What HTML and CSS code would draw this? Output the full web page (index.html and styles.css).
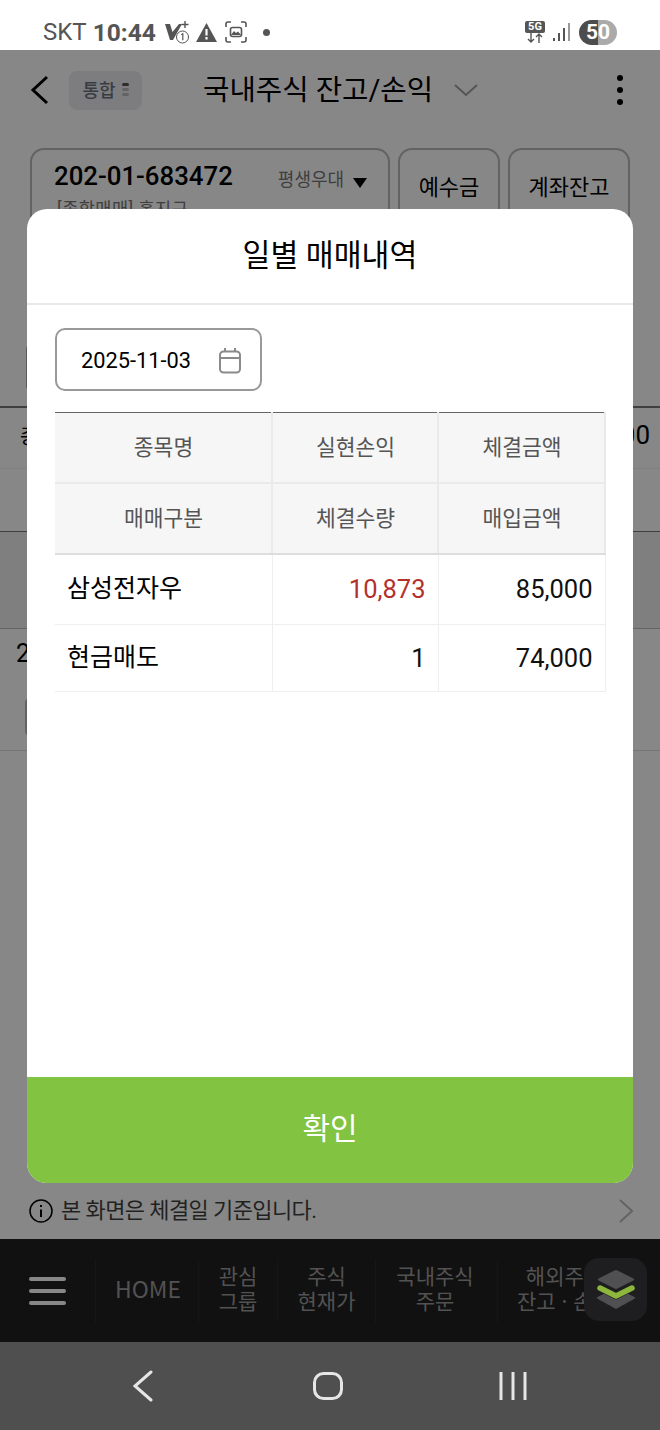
FILE: index.html
```html
<!DOCTYPE html>
<html lang="ko">
  <head>
    <meta charset="UTF-8" />
    <title>일별 매매내역</title>
    <link rel="stylesheet" href="styles.css">
  </head>
  <body>
    <div class="phone">
      <!-- status bar -->
      <div class="status-bar">
        <div class="status-left">
          <span class="carrier">SKT</span>
          <span class="clock">10:44</span>
          <svg class="status-icon" width="25" height="24" viewBox="0 0 25 24">
            <path d="M0 4h5l2.500 8L14 4h3L8 20H5z" fill="#555"/>
            <path d="M20 1v7M16.500 4.500h7" stroke="#555" stroke-width="1.400"/>
            <circle cx="17.500" cy="17" r="6" fill="#fff" stroke="#555" stroke-width="1"/>
            <path d="M16.300 14.800l1.500-1v6.500" fill="none" stroke="#555" stroke-width="1.200"/>
          </svg>
          <svg class="status-icon triangle" width="21" height="19" viewBox="0 0 21 19">
            <path d="M10.500 0L21 19H0z" fill="#555"/>
            <path d="M10.500 6v6.500M10.500 14v2.500" stroke="#fff" stroke-width="2.200"/>
          </svg>
          <svg class="status-icon" width="22" height="22" viewBox="0 0 22 22" fill="none" stroke="#555" stroke-width="1.600">
            <path d="M1 6V3a2 2 0 0 1 2-2h3M16 1h3a2 2 0 0 1 2 2v3M21 16v3a2 2 0 0 1-2 2h-3M6 21H3a2 2 0 0 1-2-2v-3"/>
            <rect x="5.500" y="6.500" width="11" height="9" rx="2"/>
            <path d="M6 14l3-4 2 2 2-1.500 3 3.500z" fill="#555" stroke="none"/>
          </svg>
          <span class="status-dot"></span>
        </div>
        <div class="status-right">
          <div class="fiveg">
            <span class="fiveg-label">5G</span>
            <svg width="20" height="10" viewBox="0 0 20 10" fill="none" stroke="#555" stroke-width="1.400">
              <path d="M6 0v9M3 6l3 3 3-3M14 10V1M11 4l3-3 3 3"/>
            </svg>
          </div>
          <svg width="18" height="20" viewBox="0 0 18 20" fill="#555">
            <rect x="0" y="16" width="2" height="3"/>
            <rect x="5" y="11" width="2" height="8"/>
            <rect x="10" y="6" width="2" height="13"/>
            <rect x="15" y="1" width="2" height="18" fill="#999"/>
          </svg>
          <div class="battery"><span class="battery-a">5</span><span class="battery-b">0</span></div>
        </div>
      </div>

      <div class="app">
        <!-- page behind the dialog -->
        <div class="app-header">
          <svg width="22" height="32" viewBox="0 0 22 32" fill="none" stroke="#000" stroke-width="3">
            <path d="M18 3L4 16l14 13"/>
          </svg>
          <div class="merge-badge">
            <span>통합</span>
            <span class="merge-dots"><i class="on"></i><i></i><i></i></span>
          </div>
          <div class="app-title">국내주식 잔고/손익</div>
          <svg class="title-arrow" width="26" height="16" viewBox="0 0 26 16" fill="none" stroke="#a0a0a0" stroke-width="2">
            <path d="M2 3l11 10L24 3"/>
          </svg>
          <div class="kebab"><i></i><i></i><i></i></div>
        </div>

        <div class="account-row">
          <div class="account-box">
            <div class="account-top">
              <span class="account-no">202-01-683472</span>
              <span class="account-kind">평생우대</span>
              <span class="account-caret"></span>
            </div>
            <div class="account-name">[종합매매] 홍지구</div>
          </div>
          <div class="tab-btn tab-small">예수금</div>
          <div class="tab-btn tab-wide">계좌잔고</div>
        </div>

        <div class="filter-row"><span class="filter-box"></span></div>

        <div class="list">
          <div class="list-head">
            <div class="list-row row-a"><span class="cut-left">종</span><span class="cut-right">000</span></div>
            <div class="list-row row-b"></div>
          </div>
          <div class="list-band"></div>
          <div class="list-item">
            <div class="item-date">2025</div>
            <span class="item-btn"></span>
          </div>
        </div>

        <div class="notice">
          <svg width="24" height="24" viewBox="0 0 24 24" fill="none" stroke="#000" stroke-width="1.500">
            <circle cx="12" cy="12" r="11"/>
            <path d="M12 10.500v7.500" stroke-width="2"/>
            <path d="M12 6v2" stroke-width="2"/>
          </svg>
          <span class="notice-text">본 화면은 체결일 기준입니다.</span>
          <svg class="notice-arrow" width="16" height="26" viewBox="0 0 16 26" fill="none" stroke="#bbb" stroke-width="2">
            <path d="M2 2l12 11L2 24"/>
          </svg>
        </div>

        <div class="menu-bar">
          <div class="menu-burger"><i></i><i></i><i></i></div>
          <div class="menu-item menu-home">HOME</div>
          <div class="menu-item menu-group">관심<br>그룹</div>
          <div class="menu-item menu-price">주식<br>현재가</div>
          <div class="menu-item menu-order">국내주식<br>주문</div>
          <div class="menu-item menu-foreign">해외주식<br>잔고 · 손익</div>
        </div>

        <div class="dim"></div>

        <div class="float-btn">
          <svg width="40" height="42" viewBox="0 0 40 42">
            <path d="M2 29l6-3 12 6 12-6 6 3-18 10z" fill="#505053" stroke="#505053" stroke-width="2" stroke-linejoin="round"/>
            <path d="M4 19l16 8 16-8" fill="none" stroke="#8cb63c" stroke-width="5.500" stroke-linecap="round" stroke-linejoin="round"/>
            <path d="M20 2L37 10.500 20 19 3 10.500z" fill="#505053" stroke="#505053" stroke-width="2" stroke-linejoin="round"/>
          </svg>
        </div>

        <!-- dialog -->
        <div class="modal">
          <div class="modal-title">일별 매매내역</div>
          <div class="modal-body">
            <div class="date-box">
              <span class="date-text">2025-11-03</span>
              <svg width="24" height="26" viewBox="0 0 24 26" fill="none" stroke="#8a8a8a" stroke-width="2">
                <rect x="2" y="3.500" width="20" height="21" rx="3.500"/>
                <path d="M2 10h20M7 0v4M17 0v4"/>
              </svg>
            </div>
            <table class="trade-table">
              <colgroup>
                <col class="col-a"><col class="col-b"><col class="col-c">
              </colgroup>
              <thead>
                <tr class="head-row-1"><th>종목명</th><th>실현손익</th><th>체결금액</th></tr>
                <tr class="head-row-2"><th>매매구분</th><th>체결수량</th><th>매입금액</th></tr>
              </thead>
              <tbody>
                <tr class="body-row-1"><td class="name">삼성전자우</td><td class="num red">10,873</td><td class="num">85,000</td></tr>
                <tr class="body-row-2"><td class="name">현금매도</td><td class="num">1</td><td class="num">74,000</td></tr>
              </tbody>
            </table>
          </div>
          <div class="confirm">확인</div>
        </div>
      </div>

      <!-- android nav -->
      <div class="sys-nav">
        <svg width="22" height="32" viewBox="0 0 22 32" fill="none" stroke="#e6e6e6" stroke-width="3" stroke-linecap="round">
          <path d="M19 2L3 16l16 14"/>
        </svg>
        <svg width="30" height="28" viewBox="0 0 30 28" fill="none" stroke="#e6e6e6" stroke-width="3">
          <rect x="1.500" y="1.500" width="27" height="25" rx="9"/>
        </svg>
        <svg width="28" height="28" viewBox="0 0 28 28" fill="none" stroke="#e6e6e6" stroke-width="3">
          <path d="M2 0v28M14 0v28M26 0v28"/>
        </svg>
      </div>
    </div>
  </body>
</html>
```

FILE: styles.css
```css
* {
  box-sizing: border-box;
}
html,
body {
  margin: 0;
  padding: 0;
}
body {
  font-family: Roboto, "Noto Sans CJK KR", sans-serif;
  background: #fff;
}
.phone {
  width: 660px;
  height: 1430px;
  display: flex;
  flex-direction: column;
  overflow: hidden;
}

/* status bar */
.status-bar {
  height: 50px;
  flex: none;
  padding: 14px 43px 0 43px;
  display: flex;
  align-items: center;
  justify-content: space-between;
  color: #555;
}
.status-left,
.status-right {
  display: flex;
  align-items: center;
}
.carrier {
  font-size: 24px;
  margin-right: 6px;
}
.clock {
  font-size: 24.500px;
  font-weight: 700;
  margin-right: 9px;
}
.status-icon {
  margin-right: 6px;
}
.triangle {
  margin-right: 8px;
}
.status-dot {
  width: 7px;
  height: 7px;
  margin-left: 10px;
  border-radius: 50%;
  background: #555;
}
.status-right {
  gap: 8px;
}
.fiveg {
  width: 20px;
  display: flex;
  flex-direction: column;
  align-items: center;
}
.fiveg-label {
  width: 20px;
  height: 12px;
  background: #555;
  color: #fff;
  border-radius: 2px;
  font-size: 11px;
  font-weight: 700;
  line-height: 12px;
  text-align: center;
}
.battery {
  width: 38px;
  height: 25px;
  display: flex;
  border-radius: 13px;
  overflow: hidden;
  font-size: 21px;
  font-weight: 700;
  line-height: 25px;
  color: #fff;
}
.battery-a {
  width: 19px;
  background: #4d4d4d;
  text-align: right;
}
.battery-b {
  width: 19px;
  background: #aaa;
  text-align: left;
}

/* page behind */
.app {
  position: relative;
  flex: 1;
  display: flex;
  flex-direction: column;
  background: #fff;
  overflow: hidden;
}
.app-header {
  height: 80px;
  flex: none;
  display: flex;
  align-items: center;
  padding: 0 0 0 29px;
}
.merge-badge {
  width: 73px;
  height: 39px;
  margin-left: 18px;
  padding-bottom: 2px;
  display: flex;
  align-items: center;
  justify-content: center;
  gap: 6px;
  background: #ededf0;
  border-radius: 8px;
  font-size: 18px;
  font-weight: 500;
  color: #6b7280;
}
.merge-dots {
  display: flex;
  flex-direction: column;
  gap: 2px;
}
.merge-dots i {
  width: 7px;
  height: 3px;
  background: #bbb;
  border-radius: 2px;
}
.merge-dots i.on {
  background: #555;
}
.app-title {
  margin-left: 61px;
  padding-bottom: 5px;
  font-size: 28.700px;
  color: #000;
  white-space: nowrap;
}
.title-arrow {
  margin-left: 20px;
}
.kebab {
  margin-left: auto;
  margin-right: 37px;
  display: flex;
  flex-direction: column;
  gap: 6px;
}
.kebab i {
  width: 6px;
  height: 6px;
  border-radius: 50%;
  background: #000;
}
.account-row {
  height: 197px;
  flex: none;
  margin-top: 18px;
  padding-left: 30px;
  display: flex;
  gap: 8px;
}
.account-box,
.tab-btn {
  height: 100px;
  border: 2px solid #bbb;
  border-radius: 14px;
}
.account-box {
  width: 360px;
  padding: 10px 22px;
  white-space: nowrap;
}
.account-top {
  display: flex;
  align-items: center;
}
.account-no {
  font-size: 25.800px;
  font-weight: 500;
  color: #000;
}
.account-kind {
  margin-left: 45px;
  padding-top: 5px;
  font-size: 18px;
  color: #777;
}
.account-caret {
  margin: 14px 0 0 9px;
  border-left: 7px solid transparent;
  border-right: 7px solid transparent;
  border-top: 10px solid #000;
}
.account-name {
  margin-top: 4px;
  margin-left: 3px;
  font-size: 17.500px;
  letter-spacing: 0.500px;
  color: #777;
}
.tab-btn {
  padding-top: 19px;
  font-size: 22px;
  text-align: center;
  color: #000;
}
.tab-small {
  width: 102px;
}
.tab-wide {
  width: 122px;
}
.filter-row {
  height: 61px;
  flex: none;
}
.filter-box {
  display: block;
  width: 60px;
  height: 45px;
  margin-left: 26px;
  border: 2px solid #aaa;
  border-radius: 4px;
}
.list {
  flex: 1;
}
.list-head {
  border-top: 2px solid #777;
  border-bottom: 1px solid #777;
}
.list-row {
  display: flex;
  justify-content: space-between;
  align-items: center;
  color: #000;
}
.row-a {
  height: 61px;
  padding: 0 10px 6px 20px;
  border-bottom: 1px solid #f2f2f2;
}
.row-b {
  height: 62px;
}
.cut-left {
  font-size: 20px;
}
.cut-right {
  font-size: 26px;
}
.list-band {
  height: 97px;
  background: #f0f0f0;
  border-bottom: 1px solid #bbb;
}
.list-item {
  height: 122px;
  padding: 10px 0 0 16px;
  border-bottom: 1px solid #ddd;
}
.item-date {
  font-size: 25px;
  line-height: 29px;
  color: #000;
}
.item-btn {
  display: block;
  width: 60px;
  height: 40px;
  margin: 29px 0 0 9px;
  border: 2px solid #bbb;
  border-radius: 6px;
}
.notice {
  height: 56px;
  flex: none;
  padding: 0 26px 0 29px;
  display: flex;
  align-items: center;
  background: #fff;
}
.notice-text {
  margin-left: 8px;
  padding-bottom: 6px;
  font-size: 22px;
  color: #000;
  opacity: 0.75;
  letter-spacing: -0.600px;
  white-space: nowrap;
}
.notice-arrow {
  margin-left: auto;
}
.menu-bar {
  height: 103px;
  flex: none;
  display: flex;
  align-items: center;
  background: #202020;
  overflow: hidden;
}
.menu-burger {
  width: 95px;
  flex: none;
  padding-left: 29px;
  display: flex;
  flex-direction: column;
  gap: 8px;
}
.menu-burger i {
  width: 37px;
  height: 4px;
  border-radius: 2px;
  background: #fff;
}
.menu-item {
  flex: none;
  height: 64px;
  padding-bottom: 5px;
  display: flex;
  align-items: center;
  justify-content: center;
  text-align: center;
  font-family: "Noto Sans CJK KR", sans-serif;
  font-size: 21px;
  line-height: 25px;
  color: #9c9c9c;
  border-left: 1px solid #2b2b2b;
  white-space: nowrap;
}
.menu-home {
  width: 103px;
  padding-left: 2px;
  font-size: 23px;
}
.menu-group {
  width: 79px;
}
.menu-price {
  width: 98px;
}
.menu-order {
  width: 122px;
  padding-right: 3px;
}
.menu-foreign {
  width: 134px;
}
.float-btn {
  position: absolute;
  left: 584px;
  top: 1208px;
  width: 63px;
  height: 63px;
  display: flex;
  align-items: center;
  justify-content: center;
  background: #1e1e20;
  border-radius: 15px;
}
.dim {
  position: absolute;
  inset: 0;
  background: rgba(0, 0, 0, 0.47);
}

/* dialog */
.modal {
  position: absolute;
  left: 27px;
  top: 159px;
  width: 606px;
  height: 974px;
  display: flex;
  flex-direction: column;
  background: #fff;
  border-radius: 20px;
  overflow: hidden;
}
.modal-title {
  height: 96px;
  flex: none;
  padding-bottom: 6px;
  display: flex;
  align-items: center;
  justify-content: center;
  border-bottom: 2px solid #e8e8e8;
  font-size: 30.300px;
  color: #000;
}
.modal-body {
  flex: 1;
  padding: 23px 28px 0 28px;
}
.date-box {
  width: 207px;
  height: 63px;
  padding: 2px 18px 0 24px;
  display: flex;
  align-items: center;
  justify-content: space-between;
  border: 2px solid #999;
  border-radius: 10px;
}
.date-text {
  font-size: 21.800px;
  color: #000;
}
.trade-table {
  width: 550px;
  margin-top: 21px;
  border-collapse: collapse;
  table-layout: fixed;
}
.col-a {
  width: 217px;
}
.col-b {
  width: 166px;
}
.col-c {
  width: 167px;
}
.trade-table th {
  padding: 0 0 4px 1px;
  background: #f6f6f6;
  border: 2px solid #eaeaea;
  border-top: 0;
  font-size: 21.500px;
  font-weight: 400;
  color: #555;
}
.trade-table td {
  border: 1px solid #efefef;
}
.trade-table th:first-child,
.trade-table td:first-child {
  border-left: 0;
}
.head-row-1 th {
  height: 70px;
  border-top: 1px solid #666 !important;
}
.head-row-2 th {
  height: 71px;
  border-bottom: 2px solid #ddd;
}
.body-row-1 td {
  height: 71px;
}
.body-row-2 td {
  height: 67px;
}
.name {
  padding: 0 0 6px 12px;
  font-size: 25px;
  color: #000;
}
.num {
  padding-right: 12px;
  text-align: right;
  font-size: 25.500px;
  color: #111;
}
.red {
  color: #b3312c;
}
.confirm {
  height: 106px;
  flex: none;
  padding-bottom: 8px;
  display: flex;
  align-items: center;
  justify-content: center;
  background: #82c341;
  color: #fff;
  font-size: 30px;
}

/* android nav */
.sys-nav {
  height: 88px;
  flex: none;
  display: grid;
  grid-template-columns: 286px 83px 287px;
  align-items: center;
  justify-items: center;
  background: #4f4f4f;
}
```
